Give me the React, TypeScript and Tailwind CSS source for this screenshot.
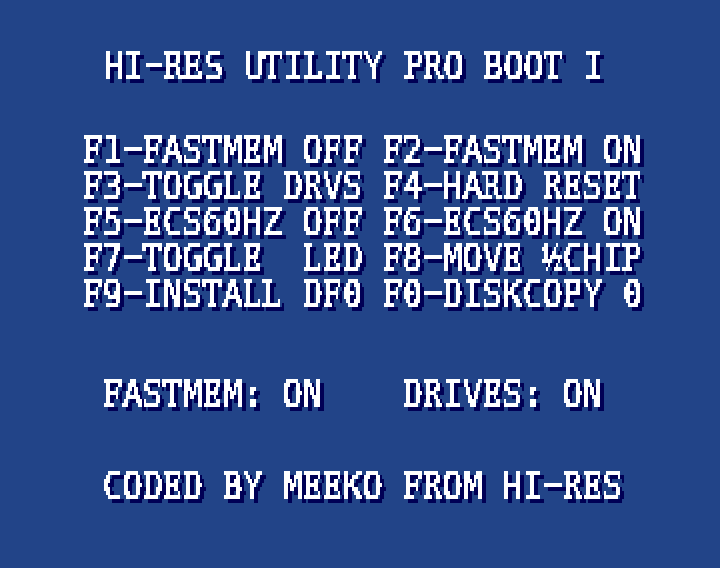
import React from "react";

const menu = [
  "F1-FASTMEM OFF F2-FASTMEM ON",
  "F3-TOGGLE DRVS F4-HARD RESET",
  "F5-ECS60HZ OFF F6-ECS60HZ ON",
  "F7-TOGGLE  LED F8-MOVE ½CHIP",
  "F9-INSTALL DF0 F0-DISKCOPY 0",
];

// Letters that take a slab face, each squeezed into the common cell.
const slab: Record<string, string> = {
  F: "scale-x-[0.92] [-webkit-text-stroke:1.4px_white]",
  E: "scale-x-[0.87] [-webkit-text-stroke:1.4px_white]",
  D: "scale-x-[0.8] [-webkit-text-stroke:2.1px_white]",
  L: "scale-x-[0.91] [-webkit-text-stroke:1.4px_white]",
  T: "scale-x-[0.92] [-webkit-text-stroke:1.4px_white]",
  P: "scale-x-[0.94] [-webkit-text-stroke:1.4px_white]",
  R: "scale-x-[0.85] [-webkit-text-stroke:1.4px_white]",
  B: "scale-x-[0.88] [-webkit-text-stroke:1.8px_white]",
};

// Snaps the type to 2x4 blocks and adds the hard drop shadow.
function PixelFilter() {
  return (
    <svg width="0" height="0" className="absolute" aria-hidden="true">
      <filter id="pixels" filterUnits="userSpaceOnUse" primitiveUnits="userSpaceOnUse" x="0" y="0" width="720" height="568" colorInterpolationFilters="sRGB">
        <feFlood x="0" y="4" width="1" height="1" floodColor="#fff" />
        <feOffset dx="0" dy="0" x="0" y="3" width="2" height="4" />
        <feTile x="0" y="0" width="720" height="568" result="grid" />
        <feComposite in="SourceGraphic" in2="grid" operator="in" result="s" />
        <feOffset in="s" dx="1" dy="0" result="s1" />
        <feMerge result="w"><feMergeNode in="s" /><feMergeNode in="s1" /></feMerge>
        <feOffset in="w" dx="0" dy="1" result="w1" />
        <feMerge result="h"><feMergeNode in="w" /><feMergeNode in="w1" /></feMerge>
        <feOffset in="h" dx="0" dy="2" result="h1" />
        <feMerge result="block"><feMergeNode in="h" /><feMergeNode in="h1" /></feMerge>
        <feOffset in="block" dx="0" dy="-1" />
        <feComponentTransfer result="hard">
          <feFuncR type="discrete" tableValues="1 1" />
          <feFuncG type="discrete" tableValues="1 1" />
          <feFuncB type="discrete" tableValues="1 1" />
          <feFuncA type="discrete" tableValues="0 1" />
        </feComponentTransfer>
        <feOffset in="hard" dx="4" dy="4" result="off" />
        <feFlood floodColor="#000055" />
        <feComposite in2="off" operator="in" result="shadow" />
        <feMerge><feMergeNode in="shadow" /><feMergeNode in="hard" /></feMerge>
      </filter>
    </svg>
  );
}

function Line({ children }: { children: string }) {
  return (
    <div className="h-[36px] origin-left scale-x-[0.89785] whitespace-pre">
      {children.split(/([-½0FEDLTPRB])/).map((part, i) =>
        part === "-" ? (
          <span key={i} className="inline-block scale-x-[1.8] scale-y-[0.8] -translate-y-[2px]">-</span>
        ) : part === "½" ? (
          <span key={i} className="inline-block w-[22.2755px] origin-left scale-x-[0.7] font-['Liberation_Sans',sans-serif] [-webkit-text-stroke:1px_white]">½</span>
        ) : part === "0" ? (
          <span key={i} className="font-bold [-webkit-text-stroke:0px_white]">0</span>
        ) : slab[part] ? (
          <span key={i} className={"inline-block w-[22.2755px] origin-left font-['DejaVu_Serif_Condensed','DejaVu_Serif',serif] font-stretch-condensed " + slab[part]}>{part}</span>
        ) : (
          part
        ),
      )}
    </div>
  );
}

export default function App() {
  return (
    <div className="h-[568px] w-[720px] overflow-hidden bg-[#224488]">
      <PixelFilter />
      <main className="flex h-[568px] w-[720px] flex-col pl-[82px] pt-[48px] font-['DejaVu_Sans_Mono',monospace] text-[37px] leading-[36px] text-white [-webkit-text-stroke:1.2px_white] [filter:url(#pixels)]">
        <div className="pl-[20.6px]"><Line>HI-RES UTILITY PRO BOOT I</Line></div>
        <div className="mt-[48px] pl-[0.3px]">
          {menu.map((row) => <Line key={row}>{row}</Line>)}
        </div>
        <div className="mt-[64px] pl-[20.3px]"><Line>FASTMEM: ON    DRIVES: ON</Line></div>
        <div className="mt-[56px] pl-[20.3px]"><Line>CODED BY MEEKO FROM HI-RES</Line></div>
      </main>
    </div>
  );
}
